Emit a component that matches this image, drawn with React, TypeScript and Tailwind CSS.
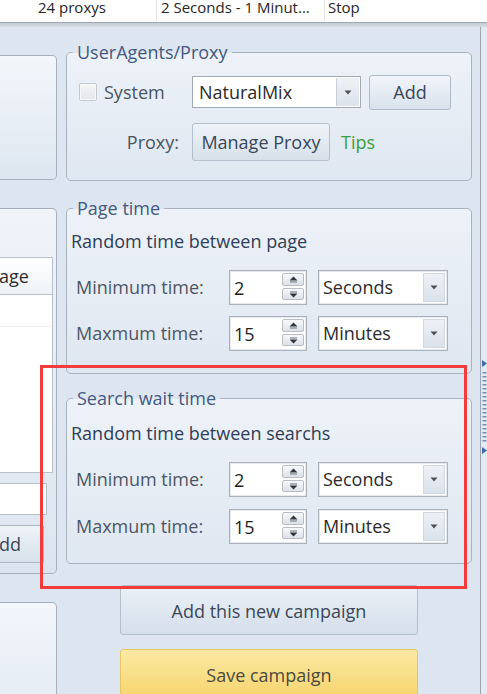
import React from "react";

function UpArrow() {
  return (
    <svg width="9" height="7" viewBox="0 0 9 7">
      <polygon points="4.5,0.5 8.5,4.5 0.5,4.5" fill="#2f3640" />
      <rect x="1" y="5.5" width="7" height="1" fill="#6b737c" />
    </svg>
  );
}
function DownArrow() {
  return (
    <svg width="9" height="7" viewBox="0 0 9 7">
      <rect x="1" y="0.5" width="7" height="1" fill="#6b737c" />
      <polygon points="0.5,2.5 8.5,2.5 4.5,6.5" fill="#2f3640" />
    </svg>
  );
}

function NumField({ value }: { value: string }) {
  return (
    <div className="flex h-[35px] w-[78px] shrink-0 items-center border border-[#a9b1ba] bg-white shadow-[inset_0_0_0_1px_#e6e9ed]">
      <span className="flex-1 pl-[4px] text-[18px] leading-none text-[#222]">{value}</span>
      <div className="mr-[2px] flex w-[22px] flex-col gap-[2px] self-start pt-[2px]">
        <div className="flex h-[13px] items-center justify-center rounded-[2px] border border-[#b6bdc5] bg-gradient-to-b from-[#f7f9fb] to-[#dde2e8]">
          <UpArrow />
        </div>
        <div className="flex h-[12px] items-center justify-center rounded-[2px] border border-[#b6bdc5] bg-gradient-to-b from-[#f7f9fb] to-[#dde2e8]">
          <DownArrow />
        </div>
      </div>
    </div>
  );
}

function Caret() {
  return (
    <svg width="8" height="5" viewBox="0 0 8 5">
      <polygon points="0.5,0.5 7.5,0.5 4,4.5" fill="#4a525c" />
    </svg>
  );
}

function Combo({ value }: { value: string }) {
  return (
    <div className="flex h-[35px] w-[130px] items-stretch border border-[#a9b1ba] bg-white p-[2px] shadow-[inset_0_0_0_1px_#e6e9ed]">
      <span className="flex flex-1 items-center pl-[2px] text-[18px] text-[#2b2b2b]">{value}</span>
      <div className="flex w-[22px] items-center justify-center border border-[#d0d8e1] bg-gradient-to-b from-[#edf1f6] to-[#dae2eb]">
        <Caret />
      </div>
    </div>
  );
}

function TimeRow({ label, value, unit }: { label: string; value: string; unit: string }) {
  return (
    <div className="flex items-center pl-[9px]">
      <span className="w-[153px] text-[18px] text-[#4d5763]">{label}</span>
      <NumField value={value} />
      <div className="ml-[11px]">
        <Combo value={unit} />
      </div>
    </div>
  );
}

function Legend({ children }: { children: React.ReactNode }) {
  return (
    <legend className="ml-[6px] px-[4px] text-[18px] leading-[22px] text-[#44597f]">{children}</legend>
  );
}

const groupCls =
  "shrink-0 rounded-[5px] border border-[#a9b3bf] bg-gradient-to-b from-[#edf2f8] to-[#dfe7f1]";

export default function App() {
  return (
    <div className="relative h-[694px] w-[487px] overflow-hidden bg-[#dde6f0] font-['Open_Sans',sans-serif]">
      {/* top strip */}
      <div className="flex h-[22px] overflow-hidden bg-white text-[15px] leading-none text-[#262626]">
        <div className="w-[157px] border-r border-[#e0e3e6] pl-[38px]">
          <span className="block">24 proxys</span>
        </div>
        <div className="w-[168px] border-r border-[#e0e3e6] pl-[4px]">
          <span className="block">2 Seconds - 1 Minut...</span>
        </div>
        <div className="pl-[3px]">
          <span className="block">Stop</span>
        </div>
      </div>
      <div className="h-[5px] border-t border-[#9ea8b3] bg-gradient-to-b from-[#c3cbd4] to-[#d6dde5]" />

      <div className="flex h-[667px]">
        {/* left column */}
        <div className="flex w-[57px] shrink-0 flex-col">
          <div className="mt-[28px] h-[125px] shrink-0 rounded-r-[5px] border border-l-0 border-[#a6b0bc] bg-gradient-to-b from-[#f3f7fb] to-[#dde6f0]" />
          <div className="mt-[28px] flex h-[366px] shrink-0 flex-col rounded-r-[5px] border border-l-0 border-[#a6b0bc] bg-gradient-to-b from-[#f0f4f9] to-[#dce5ef] pr-[3px]">
            <div className="mt-[48px] flex h-[38px] shrink-0 items-center border-b border-r border-t border-[#b9c2cc] bg-gradient-to-b from-[#ffffff] to-[#eef2f6] text-[18px] text-[#2d2d2d]">
              <span className="-ml-[1px]">age</span>
            </div>
            <div className="flex h-[178px] shrink-0 flex-col border-r border-b border-[#b9c2cc] bg-white">
              <div className="h-[32px] border-b border-[#eef0f3]" />
            </div>
            <div className="mr-[6px] mt-[10px] h-[32px] shrink-0 border border-l-0 border-[#b6bfc9] bg-white" />
            <div className="mr-[9px] mt-[10px] flex h-[38px] shrink-0 items-center rounded-r-[3px] border border-l-0 border-[#aeb9c6] bg-gradient-to-b from-[#eef3f8] to-[#d7e0ea] text-[18px] text-[#3a4658]">
              <span className="-ml-[1px]">dd</span>
            </div>
          </div>
          <div className="mt-[28px] h-[120px] shrink-0 rounded-tr-[5px] border border-l-0 border-[#a6b0bc] bg-gradient-to-b from-[#f2f6fb] to-[#e2eaf3]" />
        </div>

        {/* right column */}
        <div className="ml-[9px] flex w-[406px] shrink-0 flex-col">
          <fieldset className={`mt-[14px] h-[140px] ${groupCls}`}>
            <Legend>UserAgents/Proxy</Legend>
            <div className="mt-[11px] flex h-[36px] items-center">
              <div className="ml-[12px] h-[18px] w-[18px] rounded-[2px] border border-[#c3c8ce] bg-gradient-to-b from-[#f4f5f7] to-[#e2e5e9] shadow-[inset_0_0_0_1px_#f8f9fa]" />
              <span className="ml-[7px] w-[88px] text-[18px] text-[#4a5462]">System</span>
              <div className="flex h-[32px] w-[169px] items-stretch border border-[#a2abb5] bg-white p-[1px]">
                <span className="flex flex-1 items-center pl-[5px] text-[18px] text-[#2a2a2a]">NaturalMix</span>
                <div className="flex w-[23px] items-center justify-center border-l border-[#c6ced7] bg-gradient-to-b from-[#eef2f6] to-[#dbe2ea]">
                  <Caret />
                </div>
              </div>
              <div className="ml-[8px] flex h-[35px] w-[82px] items-center justify-center rounded-[3px] border border-[#aebac7] bg-gradient-to-b from-[#f0f4f9] to-[#d9e2ec] text-[18px] text-[#3a4658]">
                Add
              </div>
            </div>
            <div className="mt-[13px] flex h-[38px] items-center">
              <span className="w-[125px] pr-[13px] text-right text-[18px] text-[#4a5462]">Proxy:</span>
              <div className="flex h-[38px] w-[138px] items-center justify-center rounded-[3px] border border-[#b3bfcc] bg-gradient-to-b from-[#eef3f8] to-[#d7e0ea] text-[18px] text-[#3a4658]">
                Manage Proxy
              </div>
              <span className="ml-[11px] text-[18px] text-[#3c9d3c]">Tips</span>
            </div>
          </fieldset>

          <fieldset className={`mt-[16px] h-[177px] ${groupCls}`}>
            <Legend>Page time</Legend>
            <div className="mt-[10px] pl-[4px] text-[18px] leading-[24px] text-[#2f3d55]">Random time between page</div>
            <div className="mt-[17px]">
              <TimeRow label="Minimum time:" value="2" unit="Seconds" />
            </div>
            <div className="mt-[11px]">
              <TimeRow label="Maxmum time:" value="15" unit="Minutes" />
            </div>
          </fieldset>

          <fieldset className={`mt-[13px] h-[177px] ${groupCls}`}>
            <Legend>Search wait time</Legend>
            <div className="mt-[12px] pl-[4px] text-[18px] leading-[24px] text-[#2f3d55]">Random time between searchs</div>
            <div className="mt-[17px]">
              <TimeRow label="Minimum time:" value="2" unit="Seconds" />
            </div>
            <div className="mt-[12px]">
              <TimeRow label="Maxmum time:" value="15" unit="Minutes" />
            </div>
          </fieldset>

          <div className="ml-[54px] mt-[21px] flex h-[50px] w-[298px] shrink-0 items-center justify-center rounded-[3px] border border-[#b4bfcc] bg-gradient-to-b from-[#eaf0f7] to-[#d5dfea] pt-[2px] text-[18px] text-[#3c4858]">
            Add this new campaign
          </div>
          <div className="ml-[54px] mt-[14px] flex h-[52px] w-[298px] shrink-0 items-center justify-center rounded-[3px] border border-[#e4c763] bg-gradient-to-b from-[#fbe8a2] to-[#f5d46a] text-[18px] text-[#4c4a3e]">
            Save campaign
          </div>
        </div>

        {/* splitter */}
        <div className="ml-[8px] flex w-[7px] shrink-0 flex-col border-l border-[#9aa5b1] bg-[#e4eaf1]">
          <div className="ml-[1px] mt-[333px]">
            <svg width="5" height="94" viewBox="0 0 5 94">
              <polygon points="0,0 5,3.5 0,7" fill="#3f6aa8" />
              {Array.from({ length: 18 }).map((_, i) => (
                <rect key={i} x="0.5" y={12 + i * 4} width="4" height="1.5" fill="#6d8fbf" />
              ))}
              <polygon points="0,87 5,90.5 0,94" fill="#3f6aa8" />
            </svg>
          </div>
        </div>
      </div>

      {/* red highlight annotation */}
      <div className="pointer-events-none absolute left-[40px] top-[365px] h-[224px] w-[427px] border-[3px] border-[#f23c3c]" />
    </div>
  );
}
